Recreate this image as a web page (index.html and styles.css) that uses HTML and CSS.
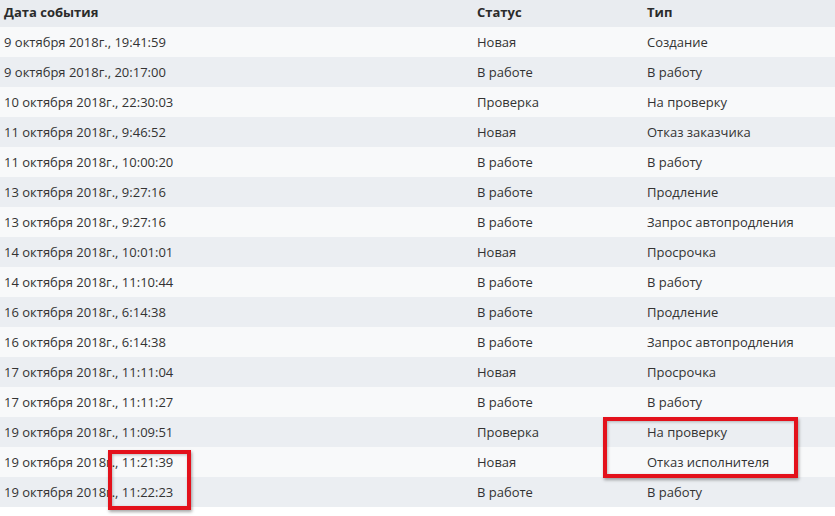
FILE: index.html
```html
<!DOCTYPE html>
<html lang="ru">
<head>
<meta charset="utf-8">
<link rel="stylesheet" href="styles.css">
</head>
<body>
<div class="wrap">
<table class="log">
<thead>
<tr><th class="c1">Дата события</th><th class="c2">Статус</th><th class="c3">Тип</th></tr>
</thead>
<tbody>
<tr><td>9 октября 2018г., 19:41:59</td><td>Новая</td><td>Создание</td></tr>
<tr><td>9 октября 2018г., 20:17:00</td><td>В работе</td><td>В работу</td></tr>
<tr><td>10 октября 2018г., 22:30:03</td><td>Проверка</td><td>На проверку</td></tr>
<tr><td>11 октября 2018г., 9:46:52</td><td>Новая</td><td>Отказ заказчика</td></tr>
<tr><td>11 октября 2018г., 10:00:20</td><td>В работе</td><td>В работу</td></tr>
<tr><td>13 октября 2018г., 9:27:16</td><td>В работе</td><td>Продление</td></tr>
<tr><td>13 октября 2018г., 9:27:16</td><td>В работе</td><td>Запрос автопродления</td></tr>
<tr><td>14 октября 2018г., 10:01:01</td><td>Новая</td><td>Просрочка</td></tr>
<tr><td>14 октября 2018г., 11:10:44</td><td>В работе</td><td>В работу</td></tr>
<tr><td>16 октября 2018г., 6:14:38</td><td>В работе</td><td>Продление</td></tr>
<tr><td>16 октября 2018г., 6:14:38</td><td>В работе</td><td>Запрос автопродления</td></tr>
<tr><td>17 октября 2018г., 11:11:04</td><td>Новая</td><td>Просрочка</td></tr>
<tr><td>17 октября 2018г., 11:11:27</td><td>В работе</td><td>В работу</td></tr>
<tr><td>19 октября 2018г., 11:09:51</td><td>Проверка</td><td>На проверку</td></tr>
<tr><td>19 октября 2018г., 11:21:39</td><td>Новая</td><td>Отказ исполнителя</td></tr>
<tr><td>19 октября 2018г., 11:22:23</td><td>В работе</td><td>В работу</td></tr>
</tbody>
</table>
<div class="mark mark-type"></div>
<div class="mark mark-time"></div>
</div>
</body>
</html>
```
FILE: styles.css
```css
html, body {
  margin: 0;
  padding: 0;
  background: #ffffff;
}
body {
  font-family: "Open Sans", "Liberation Sans", sans-serif;
  font-size: 13px;
  color: #333333;
}
.wrap {
  position: relative;
  width: 835px;
  height: 516px;
  overflow: hidden;
}
.log {
  width: 835px;
  border-collapse: collapse;
  table-layout: fixed;
}
.log th, .log td {
  padding: 0 0 0 4px;
  text-align: left;
  white-space: nowrap;
  overflow: hidden;
}
.log th {
  height: 27px;
  font-weight: 700;
  background: #e9ecf0;
  color: #2b2b2b;
  vertical-align: middle;
  line-height: 24px;
  padding-bottom: 3px;
  box-sizing: border-box;
}
.log td {
  height: 30px;
  line-height: 30px;
}
.log .c1 { width: 473px; }
.log .c2 { width: 170px; }
.log tbody tr:nth-child(odd) { background: #f8f9fa; }
.log tbody tr:nth-child(even) { background: #ebeef2; }
.mark {
  position: absolute;
  border: 4px solid #e3111b;
  box-sizing: border-box;
  box-shadow: 1px 2px 3px rgba(0,0,0,0.35), inset 1px 1px 3px rgba(0,0,0,0.25);
}
.mark-type {
  left: 603px;
  top: 417px;
  width: 195px;
  height: 61px;
}
.mark-time {
  left: 108px;
  top: 450px;
  width: 83px;
  height: 60px;
}
```
